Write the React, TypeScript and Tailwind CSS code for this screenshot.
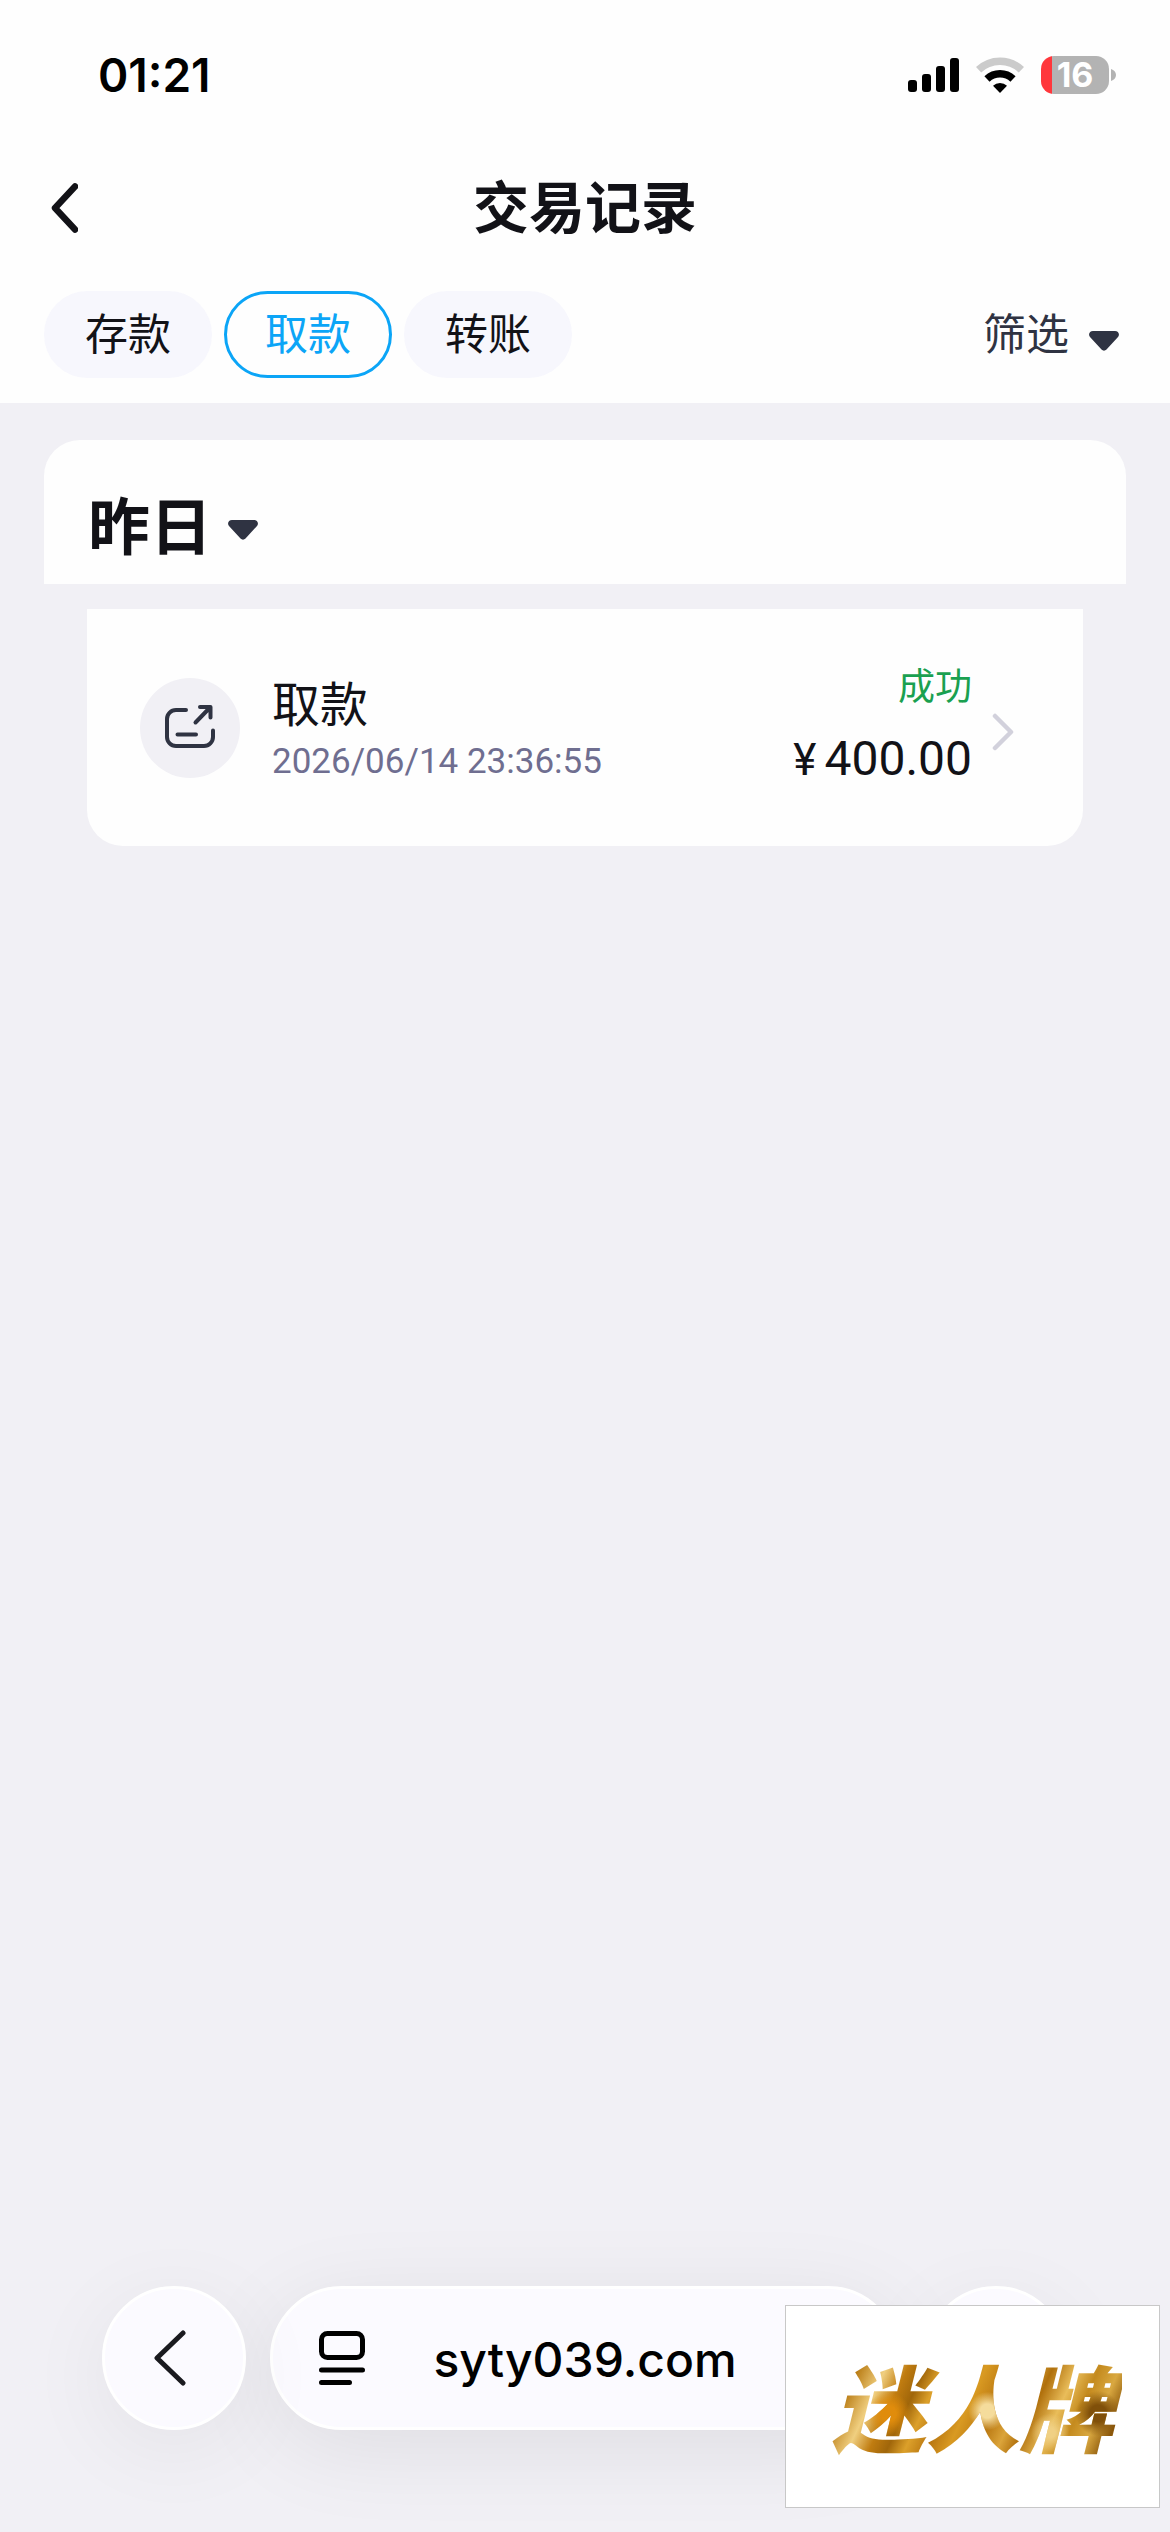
import clsx from 'clsx';

const tabs = [
  { value: 'deposit', label: '存款' },
  { value: 'withdraw', label: '取款' },
  { value: 'transfer', label: '转账' }
];

const records = [
  { id: 1, title: '取款', time: '2026/06/14 23:36:55', status: '成功', amount: '400.00' }
];

function SignalIcon() {
  return (
    <svg width="51" height="34" viewBox="0 0 51 34" aria-hidden="true">
      <rect x="0" y="22" width="9" height="12" rx="3" />
      <rect x="14" y="16" width="9" height="18" rx="3" />
      <rect x="28" y="8" width="9" height="26" rx="3" />
      <rect x="42" y="0" width="9" height="34" rx="3" />
    </svg>
  );
}

function WifiIcon() {
  return (
    <svg width="48" height="36" viewBox="0 0 48 36" fill="none" aria-hidden="true">
      <path d="M2.6 12.8a31 31 0 0 1 42.8 0" stroke="#cbcbcb" strokeWidth="7.5" />
      <path d="M11 22a18.8 18.8 0 0 1 26 0" stroke="#000" strokeWidth="7.5" />
      <path d="M24 36l-7-7.2a10 10 0 0 1 14 0z" fill="#000" />
    </svg>
  );
}

function Battery() {
  return (
    <div className="flex items-center gap-0.5">
      <div className="flex h-[38px] w-[68px] items-center justify-center rounded-[13px] bg-linear-to-r from-[#ff373c] from-[16%] to-[#b3b3b3] to-[16%] text-[34px] leading-none font-bold text-white">
        16
      </div>
      <svg width="5" height="12" viewBox="0 0 5 12" aria-hidden="true">
        <path d="M0 0c3 1 5 3.2 5 6s-2 5-5 6z" fill="#b3b3b3" />
      </svg>
    </div>
  );
}

function CaretIcon({ className }: { className?: string }) {
  return (
    <svg width="30" height="20" viewBox="0 0 30 20" className={className} aria-hidden="true">
      <path d="M4 0h22c3.6 0 5.2 3.6 2.8 6.2L17.5 18.6c-1.4 1.5-3.6 1.5-5 0L1.2 6.2C-1.2 3.6.4 0 4 0z" fill="#2f3342" />
    </svg>
  );
}

function WithdrawIcon() {
  return (
    <svg width="50" height="44" viewBox="0 0 50 44" fill="none" stroke="#2f3342" strokeWidth="4" strokeLinecap="round" strokeLinejoin="round" aria-hidden="true">
      <path d="M21 6h-10a9 9 0 0 0-9 9v18a9 9 0 0 0 9 9h28a9 9 0 0 0 9-9V26.5" />
      <path d="M30.5 18.5L45 3.5M35 3h10.500v10.500M12.500 30.500h18.500" />
    </svg>
  );
}

function App() {
  return (
    <div className="relative flex min-h-screen flex-col bg-[#f1f0f5] font-['Inter','Noto_Sans_CJK_SC',sans-serif] text-[#121217]">
      <header className="bg-[#fefefe] pb-[25px]">
        <div className="flex h-[150px] items-center justify-between pr-[54px] pl-[98px] text-black">
          <time className="text-[46px] font-semibold">01:21</time>
          <div className="flex items-center gap-[17px]">
            <SignalIcon />
            <WifiIcon />
            <Battery />
          </div>
        </div>

        <div className="grid h-[116px] grid-cols-[1fr_auto_1fr] items-center px-[51px]">
          <button type="button" aria-label="返回" className="justify-self-start">
            <svg width="27" height="50" viewBox="0 0 27 50" fill="none" stroke="#121217" strokeWidth="6.5" strokeLinecap="round" strokeLinejoin="round">
              <path d="M24 3.5L4 25l20 21.5" />
            </svg>
          </button>
          <h1 className="text-[56px] font-bold">交易记录</h1>
        </div>

        <div className="flex items-center justify-between pt-[25px] pr-[51px] pl-11">
          <nav className="flex gap-3">
            {tabs.map((tab) => (
              <button
                key={tab.value}
                type="button"
                className={clsx(
                  'h-[87px] rounded-full border-[3px] px-[38px] text-[43px] leading-none',
                  tab.value === 'withdraw' ? 'border-[#0ba5f7] text-[#0ba5f7]' : 'border-[#f7f7fd] bg-[#f7f7fd]'
                )}
              >
                {tab.label}
              </button>
            ))}
          </nav>
          <button type="button" className="flex items-center gap-5 text-[43px] leading-none text-[#2f3342]">
            筛选
            <CaretIcon className="mt-3" />
          </button>
        </div>
      </header>

      <main>
        <section className="mx-11 mt-[37px] rounded-t-[36px] bg-[#fefefe] px-11 pt-11 pb-3">
          <button type="button" className="flex items-center gap-4 text-[62px] leading-[88px] font-bold">
            昨日
            <CaretIcon className="mt-1" />
          </button>
        </section>

        <ul className="mx-[87px] mt-[25px] overflow-hidden rounded-b-[36px] bg-[#fefefe]">
          {records.map((record) => (
            <li key={record.id}>
              <button type="button" className="flex h-[237px] w-full items-center pr-[69px] pl-[53px] text-left">
                <span className="flex size-[100px] items-center justify-center rounded-full bg-[#f1f0f5] pb-1">
                  <WithdrawIcon />
                </span>
                <span className="ml-8 flex flex-1 flex-col pt-2">
                  <span className="text-[48px] leading-[60px]">{record.title}</span>
                  <span className="font-[Roboto,sans-serif] text-[35px] leading-[54px] text-[#6f6e90]">{record.time}</span>
                </span>
                <span className="flex flex-col items-end gap-3 pb-2">
                  <span className="text-[37px] leading-[60px] text-[#1aa050]">{record.status}</span>
                  <span className="flex items-baseline gap-2 font-[Roboto,sans-serif] leading-[60px]">
                    <span className="text-[44px]">¥</span>
                    <span className="text-[48px]">{record.amount}</span>
                  </span>
                </span>
                <svg width="22" height="38" viewBox="0 0 22 38" fill="none" stroke="#d2d1dc" strokeWidth="4.5" strokeLinecap="round" strokeLinejoin="round" className="mt-2 ml-5" aria-hidden="true">
                  <path d="M3 3l16 16L3 35" />
                </svg>
              </button>
            </li>
          ))}
        </ul>
      </main>

      <footer className="mt-auto flex gap-6 px-[102px] pb-[102px]">
        <button type="button" aria-label="后退" className="z-10 flex size-36 items-center justify-center rounded-full border-[3px] border-white bg-[#fbfaff] pr-2 shadow-[0_18px_90px_rgba(0,0,0,0.06)]">
          <svg width="32" height="56" viewBox="0 0 32 56" fill="none" stroke="#1a1a1f" strokeWidth="5" strokeLinecap="round" strokeLinejoin="round">
            <path d="M29 3L3 28l26 25" />
          </svg>
        </button>
        <button type="button" className="flex h-36 flex-1 items-center justify-between rounded-full border-[3px] border-white bg-[#fbfaff] px-[46px] text-black shadow-[0_18px_90px_rgba(0,0,0,0.08)]">
          <svg width="46" height="54" viewBox="0 0 46 54" fill="none" stroke="#000" strokeWidth="5" strokeLinecap="round" aria-hidden="true">
            <rect x="2.5" y="2.5" width="41" height="24" rx="6" />
            <path d="M2.5 39h41M2.5 51.5h28" />
          </svg>
          <span className="pt-1 text-[48px] font-medium">syty039.com</span>
          <span className="w-[46px]" />
        </button>
        <button type="button" aria-label="更多" className="size-36 rounded-full border-[3px] border-white bg-[#fbfaff] shadow-[0_18px_90px_rgba(0,0,0,0.06)]" />
      </footer>

      <div className="absolute right-[10px] bottom-6 z-20 flex h-[203px] w-[375px] items-center justify-center border border-[#c8c8c8] bg-white pt-2">
        <span className="bg-[radial-gradient(circle_at_55%_50%,#f5dc9c_0_4%,transparent_11%),radial-gradient(circle_at_22%_52%,#e08c0c_0_3%,transparent_9%),radial-gradient(circle_at_92%_52%,#80500a_0_3%,transparent_8%),radial-gradient(circle_at_76%_68%,#f0d084_0_2%,transparent_8%),linear-gradient(115deg,#9a6206_4%,#b87a12_12%,#f0cf80_20%,#c07c10_26%,#a0660a_31%,#dca02a_36%,#b87610_42%,#d99a22_48%,#b87610_56%,#dba43a_62%,#b0700c_67%,#e9bd5a_74%,#c48a1e_80%,#d9a840_86%,#8a560a_92%,#e0a93a_98%)] bg-clip-text px-2 text-[94px] leading-[120px] font-black text-transparent italic">
          迷人牌
        </span>
      </div>
    </div>
  );
}

export default App;
